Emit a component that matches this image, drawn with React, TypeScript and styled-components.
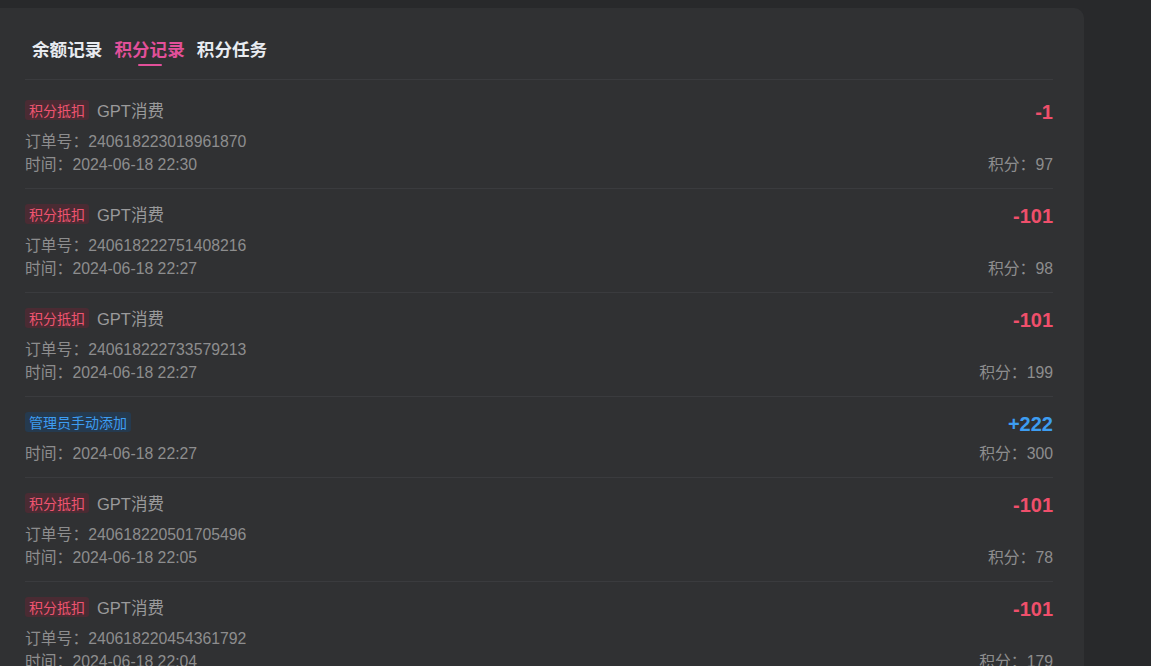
import React from "react";
import styled, { createGlobalStyle } from "styled-components";

const Global = createGlobalStyle`
  html, body { margin: 0; padding: 0; background: #28292b; }
  body { font-family: "Liberation Sans", "Noto Sans CJK SC", Arial, sans-serif; overflow: hidden; }
  * { box-sizing: border-box; }
`;

const Page = styled.div`
  padding-top: 8px;
  height: 666px;
  overflow: hidden;
`;

const Card = styled.div`
  width: 1084px;
  background: #303133;
  border-radius: 0 10px 0 0;
  padding: 30px 31px 0 25px;
  min-height: 700px;
`;

const Tabs = styled.div`
  display: flex;
  padding-left: 1px;
  border-bottom: 1px solid #3a3b3e;
  height: 42px;
`;

const Tab = styled.div<{ $active?: boolean }>`
  position: relative;
  padding: 0 6px;
  font-size: 17.6px;
  line-height: 24px;
  font-weight: 700;
  color: ${(p) => (p.$active ? "#e2509a" : "#e8ebf0")};
  &::after {
    content: "";
    display: ${(p) => (p.$active ? "block" : "none")};
    position: absolute;
    left: 50%;
    transform: translateX(-50%);
    top: 26px;
    width: 24px;
    height: 2px;
    border-radius: 1px;
    background: #e2509a;
  }
`;

const List = styled.div`
  padding-top: 5px;
`;

const Row = styled.div`
  display: flex;
  justify-content: space-between;
  padding: 15px 0 12px;
  border-bottom: 1px solid #3a3b3e;
`;

const Left = styled.div`
  display: flex;
  flex-direction: column;
`;

const Head = styled.div`
  display: flex;
  align-items: center;
  height: 20px;
  margin-bottom: 10px;
  gap: 8px;
`;

const Tag = styled.span<{ $kind: "red" | "blue" }>`
  display: inline-flex;
  align-items: center;
  height: 20px;
  padding: 0 4px;
  border-radius: 3px;
  font-size: 14px;
  color: ${(p) => (p.$kind === "red" ? "#ef5470" : "#3d9df2")};
  background: ${(p) => (p.$kind === "red" ? "#4a2b33" : "#253a4f")};
`;

const Title = styled.span`
  font-size: 16.5px;
  color: #9a9a9b;
`;

const Line = styled.div`
  font-size: 15.8px;
  line-height: 23px;
  color: #8d8d8e;
`;

const Right = styled.div`
  display: flex;
  flex-direction: column;
  justify-content: space-between;
  align-items: flex-end;
`;

const Amount = styled.div<{ $plus?: boolean }>`
  font-size: 20px;
  font-weight: 700;
  line-height: 24px;
  color: ${(p) => (p.$plus ? "#3d9df2" : "#ef4f6b")};
`;

type Rec = {
  tag: "red" | "blue";
  tagText: string;
  title?: string;
  order?: string;
  time: string;
  amount: string;
  score: number;
};

const records: Rec[] = [
  { tag: "red", tagText: "积分抵扣", title: "GPT消费", order: "240618223018961870", time: "2024-06-18 22:30", amount: "-1", score: 97 },
  { tag: "red", tagText: "积分抵扣", title: "GPT消费", order: "240618222751408216", time: "2024-06-18 22:27", amount: "-101", score: 98 },
  { tag: "red", tagText: "积分抵扣", title: "GPT消费", order: "240618222733579213", time: "2024-06-18 22:27", amount: "-101", score: 199 },
  { tag: "blue", tagText: "管理员手动添加", time: "2024-06-18 22:27", amount: "+222", score: 300 },
  { tag: "red", tagText: "积分抵扣", title: "GPT消费", order: "240618220501705496", time: "2024-06-18 22:05", amount: "-101", score: 78 },
  { tag: "red", tagText: "积分抵扣", title: "GPT消费", order: "240618220454361792", time: "2024-06-18 22:04", amount: "-101", score: 179 },
  { tag: "red", tagText: "积分抵扣", title: "GPT消费", order: "240618220412345678", time: "2024-06-18 22:04", amount: "-101", score: 280 },
];

export default function App() {
  return (
    <Page>
      <Global />
      <Card>
        <Tabs>
          <Tab>余额记录</Tab>
          <Tab $active>积分记录</Tab>
          <Tab>积分任务</Tab>
        </Tabs>
        <List>
          {records.map((r, i) => (
            <Row key={i}>
              <Left>
                <Head>
                  <Tag $kind={r.tag}>{r.tagText}</Tag>
                  {r.title && <Title>{r.title}</Title>}
                </Head>
                {r.order && <Line>订单号：{r.order}</Line>}
                <Line>时间：{r.time}</Line>
              </Left>
              <Right>
                <Amount $plus={r.amount.startsWith("+")}>{r.amount}</Amount>
                <Line>积分：{r.score}</Line>
              </Right>
            </Row>
          ))}
        </List>
      </Card>
    </Page>
  );
}
